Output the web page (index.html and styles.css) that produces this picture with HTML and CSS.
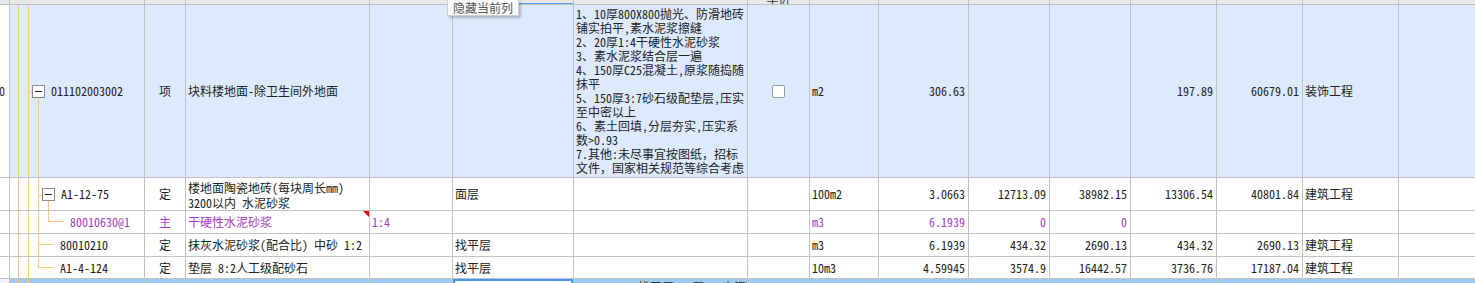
FILE: index.html
```html
<!DOCTYPE html>
<html lang="zh-CN">
<head>
<meta charset="utf-8">
<title>清单</title>
<link rel="stylesheet" href="styles.css">
</head>
<body>
<div class="sheet">
  <div class="grid">
    <div class="row head">
      <div class="c"></div><div class="c"></div><div class="c"></div><div class="c"></div><div class="c"></div>
      <div class="c sel-head"></div><div class="c"></div><div class="c hdtext"><span>单价</span></div>
      <div class="c"></div><div class="c"></div><div class="c"></div><div class="c"></div><div class="c"></div><div class="c"></div><div class="c"></div><div class="c"></div>
    </div>

    <div class="row main">
      <div class="c idx"><span>10</span></div>
      <div class="c tree t-main"><span class="tog"><i></i></span><span class="code">011102003002</span></div>
      <div class="c ctr">项</div>
      <div class="c">块料楼地面-除卫生间外地面</div>
      <div class="c"></div>
      <div class="c"></div>
      <div class="c desc">
        <div>1、10厚800X800抛光、防滑地砖</div>
        <div>铺实拍平,素水泥浆擦缝</div>
        <div>2、20厚1:4干硬性水泥砂浆</div>
        <div>3、素水泥浆结合层一遍</div>
        <div>4、150厚C25混凝土,原浆随捣随</div>
        <div>抹平</div>
        <div>5、150厚3:7砂石级配垫层,压实</div>
        <div>至中密以上</div>
        <div>6、素土回填,分层夯实,压实系</div>
        <div>数&gt;0.93</div>
        <div>7.其他:未尽事宜按图纸，招标</div>
        <div>文件，国家相关规范等综合考虑</div>
      </div>
      <div class="c ctr"><span class="chk"></span></div>
      <div class="c">m2</div>
      <div class="c num">306.63</div>
      <div class="c num"></div>
      <div class="c num"></div>
      <div class="c num">197.89</div>
      <div class="c num">60679.01</div>
      <div class="c">装饰工程</div>
      <div class="c"></div>
    </div>

    <div class="row sub r2">
      <div class="c idx"></div>
      <div class="c tree t-r2"><span class="tog"><i></i></span><span class="code">A1-12-75</span></div>
      <div class="c ctr">定</div>
      <div class="c two">楼地面陶瓷地砖(每块周长mm)<br>3200以内 水泥砂浆</div>
      <div class="c"></div>
      <div class="c">面层</div>
      <div class="c"></div>
      <div class="c"></div>
      <div class="c">100m2</div>
      <div class="c num">3.0663</div>
      <div class="c num">12713.09</div>
      <div class="c num">38982.15</div>
      <div class="c num">13306.54</div>
      <div class="c num">40801.84</div>
      <div class="c">建筑工程</div>
      <div class="c"></div>
    </div>

    <div class="row sub r3 purple">
      <div class="c idx"></div>
      <div class="c tree t-r3"><span class="code">80010630@1</span></div>
      <div class="c ctr">主</div>
      <div class="c flag">干硬性水泥砂浆<span class="tri"></span></div>
      <div class="c">1:4</div>
      <div class="c"></div>
      <div class="c"></div>
      <div class="c"></div>
      <div class="c">m3</div>
      <div class="c num">6.1939</div>
      <div class="c num">0</div>
      <div class="c num">0</div>
      <div class="c num"></div>
      <div class="c num"></div>
      <div class="c"></div>
      <div class="c"></div>
    </div>

    <div class="row sub r4">
      <div class="c idx"></div>
      <div class="c tree t-r4"><span class="code">80010210</span></div>
      <div class="c ctr">定</div>
      <div class="c">抹灰水泥砂浆(配合比) 中砂 1:2</div>
      <div class="c"></div>
      <div class="c">找平层</div>
      <div class="c"></div>
      <div class="c"></div>
      <div class="c">m3</div>
      <div class="c num">6.1939</div>
      <div class="c num">434.32</div>
      <div class="c num">2690.13</div>
      <div class="c num">434.32</div>
      <div class="c num">2690.13</div>
      <div class="c">建筑工程</div>
      <div class="c"></div>
    </div>

    <div class="row sub r5">
      <div class="c idx"></div>
      <div class="c tree t-r5"><span class="code">A1-4-124</span></div>
      <div class="c ctr">定</div>
      <div class="c">垫层 8:2人工级配砂石</div>
      <div class="c"></div>
      <div class="c">找平层</div>
      <div class="c"></div>
      <div class="c"></div>
      <div class="c">10m3</div>
      <div class="c num">4.59945</div>
      <div class="c num">3574.9</div>
      <div class="c num">16442.57</div>
      <div class="c num">3736.76</div>
      <div class="c num">17187.04</div>
      <div class="c">建筑工程</div>
      <div class="c"></div>
    </div>

    <div class="row foot">
      <div class="c idx"></div>
      <div class="c tree t-foot"></div>
      <div class="c"></div><div class="c"></div><div class="c"></div>
      <div class="c selcell"></div>
      <div class="c peek">1、找平层 20厚1:3水泥砂浆找平</div>
      <div class="c"></div><div class="c"></div><div class="c"></div><div class="c"></div><div class="c"></div><div class="c"></div><div class="c"></div><div class="c"></div><div class="c"></div>
    </div>
  </div>
  <div class="tip">隐藏当前列</div>
</div>
</body>
</html>
```

FILE: styles.css
```css
* { box-sizing: border-box; }
html, body { margin: 0; padding: 0; background: #fff; }
body {
  width: 1475px;
  height: 283px;
  overflow: hidden;
  font-family: "Noto Sans Mono CJK SC", "Noto Sans CJK SC", sans-serif;
  font-size: 12px;
  color: #222;
}
.sheet { position: relative; height: 283px; overflow: hidden; }
.grid {
  display: flex;
  flex-direction: column;
  row-gap: 1px;
  background: #c2c2c2;
  height: 300px;
}
.row {
  display: grid;
  grid-template-columns: 9px 134px 40px 183px 82px 120px 173px 61px 68px 89px 80px 80px 85px 85px 95px 1fr;
  column-gap: 1px;
}
.c {
  display: flex;
  align-items: center;
  padding: 0 2px;
  white-space: nowrap;
  overflow: hidden;
  line-height: 14px;
  background: #fff;
}
.head { height: 4px; }
.head .c { background: #e8e8e8; }
.head .sel-head { box-shadow: inset 0 -1px 0 #4d9df0; }
.hdtext { justify-content: center; align-items: flex-end; }
.hdtext span { line-height: 12px; margin-bottom: 0px; color: #333; }

.main { height: 172px; }
.main .c { background: #dde9fc; }
.main .idx { background: #fff; }
.r2 { height: 32px; }
.r3, .r4 { height: 22px; }
.r5 { height: 21px; }
.foot { flex: 1; }
.foot .c { background: #9ccaf3; }
.foot .idx { background: #f2f4f7; }
.foot .selcell { background: #fff; box-shadow: inset 0 0 0 2px #3d97f0; }
.foot .peek { align-items: flex-start; padding: 1px 0 0 46px; color: #333; }

.idx { justify-content: flex-end; padding: 0 4px 0 0; }
.ctr { justify-content: center; }
.num { justify-content: flex-end; padding-right: 3px; }
.two { line-height: 15px; padding-top: 1px; }
.desc {
  flex-direction: column;
  align-items: flex-start;
  justify-content: flex-start;
  padding-top: 2px;
}
.purple .c { color: #a63cc0; }
.flag { position: relative; }
.tri {
  position: absolute;
  top: 0;
  right: 0;
  width: 0;
  height: 0;
  border-top: 6px solid #f00000;
  border-left: 6px solid transparent;
}
.chk {
  width: 13px;
  height: 13px;
  border: 1px solid #9a9a9a;
  border-radius: 2px;
  background: #fff;
}
.tog {
  width: 13px;
  height: 13px;
  border: 1px solid #8a8a8a;
  background: #fff;
  display: flex;
  align-items: center;
  justify-content: center;
  flex: none;
}
.tog i { display: block; width: 7px; height: 1px; background: #222; }
.tree { padding: 0; column-gap: 6px; }
.tree { --o: #fdc87d; }
.t-main {
  padding-left: 22px;
  background:
    linear-gradient(var(--o), var(--o)) 8px 0 / 1px 100% no-repeat,
    linear-gradient(var(--o), var(--o)) 18px 0 / 1px 100% no-repeat,
    linear-gradient(var(--o), var(--o)) 28px 92px / 1px 100% no-repeat,
    linear-gradient(var(--o), var(--o)) 18px 86px / 4px 1px no-repeat,
    #dde9fc !important;
}
.t-r2 {
  padding-left: 32px;
  background:
    linear-gradient(var(--o), var(--o)) 8px 0 / 1px 100% no-repeat,
    linear-gradient(var(--o), var(--o)) 18px 0 / 1px 100% no-repeat,
    linear-gradient(var(--o), var(--o)) 28px 0 / 1px 100% no-repeat,
    linear-gradient(var(--o), var(--o)) 38px 23px / 1px 100% no-repeat,
    linear-gradient(var(--o), var(--o)) 28px 17px / 4px 1px no-repeat,
    #fff;
}
.t-r3 {
  padding-left: 60px;
  background:
    linear-gradient(var(--o), var(--o)) 8px 0 / 1px 100% no-repeat,
    linear-gradient(var(--o), var(--o)) 18px 0 / 1px 100% no-repeat,
    linear-gradient(var(--o), var(--o)) 28px 0 / 1px 100% no-repeat,
    linear-gradient(var(--o), var(--o)) 38px 0 / 1px 10px no-repeat,
    linear-gradient(var(--o), var(--o)) 38px 10px / 16px 1px no-repeat,
    #fff;
}
.t-r4 {
  padding-left: 50px;
  background:
    linear-gradient(var(--o), var(--o)) 8px 0 / 1px 100% no-repeat,
    linear-gradient(var(--o), var(--o)) 18px 0 / 1px 100% no-repeat,
    linear-gradient(var(--o), var(--o)) 28px 0 / 1px 100% no-repeat,
    linear-gradient(var(--o), var(--o)) 28px 10px / 16px 1px no-repeat,
    #fff;
}
.t-r5 {
  padding-left: 50px;
  background:
    linear-gradient(var(--o), var(--o)) 8px 0 / 1px 100% no-repeat,
    linear-gradient(var(--o), var(--o)) 18px 0 / 1px 100% no-repeat,
    linear-gradient(var(--o), var(--o)) 28px 0 / 1px 10px no-repeat,
    linear-gradient(var(--o), var(--o)) 28px 10px / 16px 1px no-repeat,
    #fff;
}
.foot .t-foot {
  background:
    linear-gradient(var(--o), var(--o)) 8px 0 / 1px 100% no-repeat,
    linear-gradient(var(--o), var(--o)) 18px 0 / 1px 100% no-repeat,
    #9ccaf3;
}
.tip {
  position: absolute;
  left: 447px;
  top: 0;
  height: 16px;
  padding: 0 5px;
  line-height: 15px;
  color: #555;
  background: #fbfbfb;
  border: 1px solid #cfcfcf;
  border-top: none;
  box-shadow: 2px 2px 2px rgba(0, 0, 0, 0.22);
}
```
